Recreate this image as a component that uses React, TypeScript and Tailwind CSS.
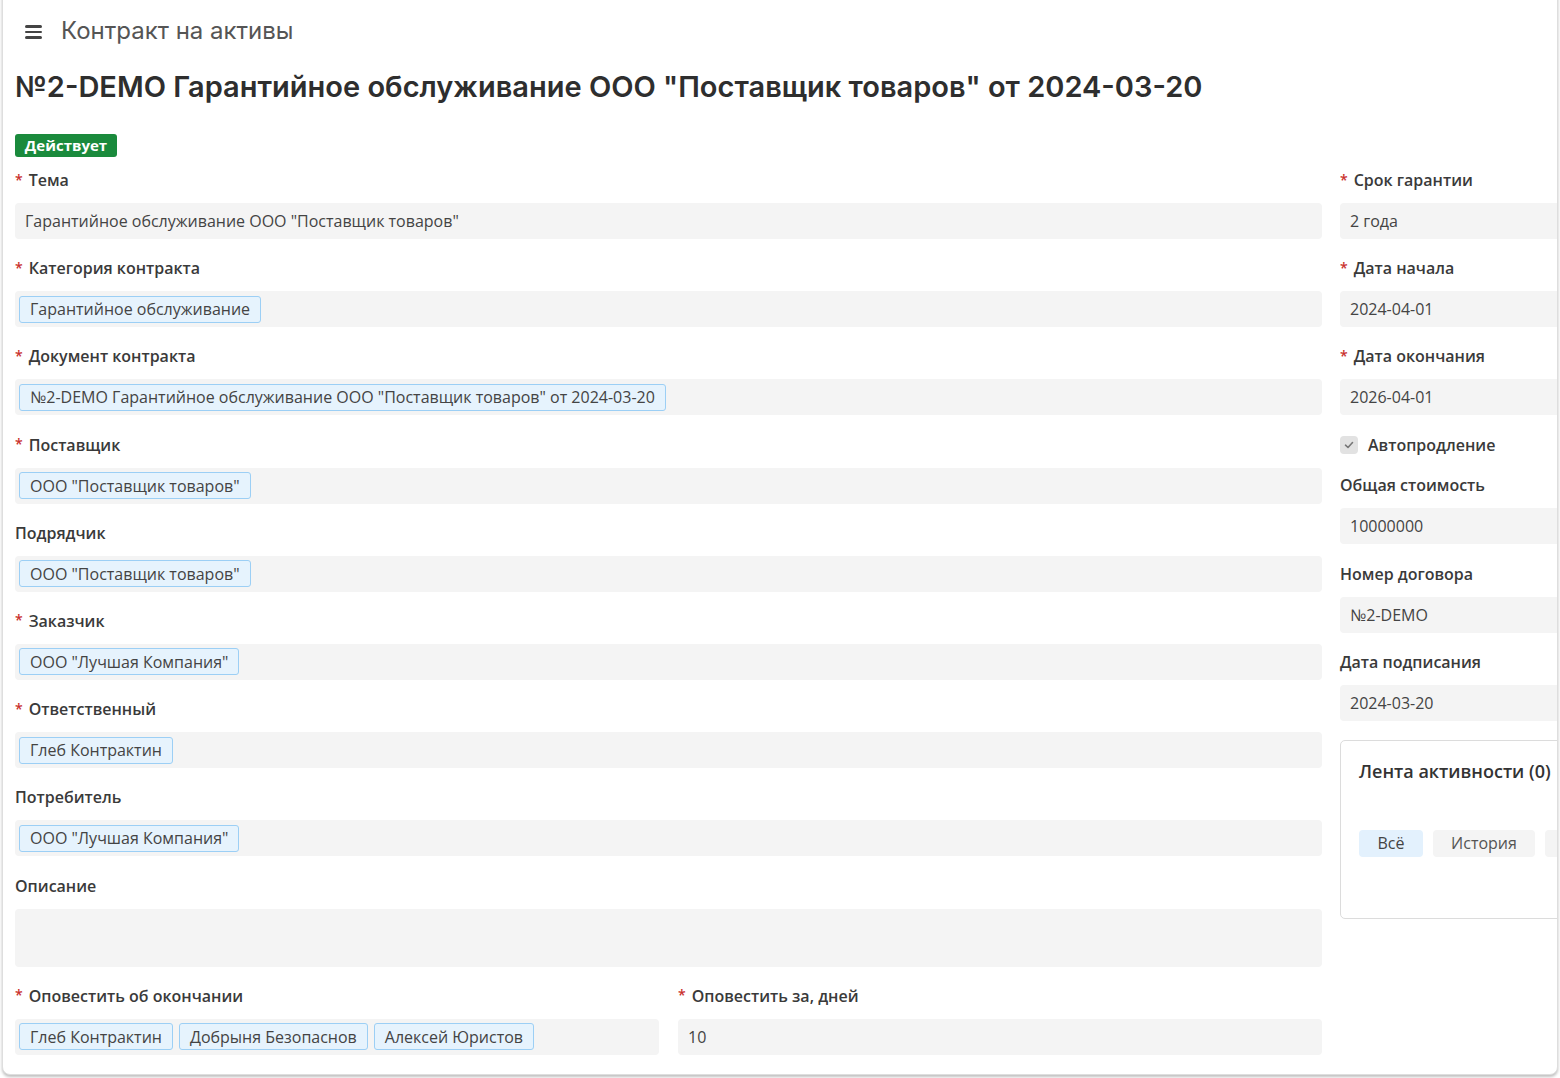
import React from "react";

const Req = () => <span className="text-[#c9302c] mr-[6px] text-[14px] leading-none relative top-[-1px]">*</span>;

function Label({ req, children }: { req?: boolean; children: React.ReactNode }) {
  return (
    <div className="h-[21px] leading-[21px] text-[16px] font-semibold text-[#3a3a3a] flex items-center whitespace-nowrap">
      {req && <Req />}
      {children}
    </div>
  );
}

function Chip({ children }: { children: React.ReactNode }) {
  return (
    <div className="h-[27px] px-[10px] border border-[#9ccff5] bg-[#e6f3fd] rounded-[3px] flex items-center text-[16px] text-[#444] whitespace-nowrap">
      {children}
    </div>
  );
}

function Input({ children, chips, h = "h-9" }: { children?: React.ReactNode; chips?: boolean; h?: string }) {
  return (
    <div
      className={`${h} rounded-[4px] bg-[#f4f4f4] flex items-center text-[16px] text-[#444] whitespace-nowrap ${
        chips ? "px-[4px] gap-[6px]" : "px-[10px]"
      }`}
    >
      {children}
    </div>
  );
}

function Field({ label, req, children }: { label: string; req?: boolean; children: React.ReactNode }) {
  return (
    <div className="flex flex-col gap-[12px]">
      <Label req={req}>{label}</Label>
      {children}
    </div>
  );
}

export default function App() {
  return (
    <div className="w-[1560px] h-[1078px] bg-white overflow-hidden" style={{ fontFamily: '"Open Sans", "Noto Sans", sans-serif' }}>
      <div className="ml-[2px] mt-[-10px] w-[1556px] h-[1085px] border border-[#dedede] rounded-b-[8px] shadow-[0_2px_3px_rgba(0,0,0,0.25)] overflow-hidden bg-white pt-[10px] px-[12px]">
        {/* header */}
        <div className="h-[62px] flex items-center">
          <div className="ml-[10px] w-[17px] flex flex-col gap-[3px]">
            <div className="h-[2.5px] bg-[#444] rounded" />
            <div className="h-[2.5px] bg-[#444] rounded" />
            <div className="h-[2.5px] bg-[#444] rounded" />
          </div>
          <div className="ml-[19px] text-[24px] text-[#555] leading-[30px] relative top-[-1px]" style={{ fontFamily: 'Inter, "Noto Sans", sans-serif' }}>
            Контракт на активы
          </div>
        </div>
        <div className="mt-[7px] h-[36px] leading-[36px] text-[29px] font-semibold text-[#2e2e2e] whitespace-nowrap relative top-[-1px]" style={{ fontFamily: 'Inter, "Noto Sans", sans-serif' }}>
          №2-DEMO Гарантийное обслуживание ООО "Поставщик товаров" от 2024-03-20
        </div>
        <div className="mt-[28px] h-[23px] w-[102px] bg-[#1a8a3c] rounded-[3px] text-white font-bold text-[15px] flex items-center justify-center">
          Действует
        </div>

        <div className="mt-[13px] flex gap-[18px]">
          {/* left column */}
          <div className="w-[1307px] shrink-0 flex flex-col gap-[19.2px]">
            <Field label="Тема" req>
              <Input>Гарантийное обслуживание ООО "Поставщик товаров"</Input>
            </Field>
            <Field label="Категория контракта" req>
              <Input chips>
                <Chip>Гарантийное обслуживание</Chip>
              </Input>
            </Field>
            <Field label="Документ контракта" req>
              <Input chips>
                <Chip>№2-DEMO Гарантийное обслуживание ООО "Поставщик товаров" от 2024-03-20</Chip>
              </Input>
            </Field>
            <Field label="Поставщик" req>
              <Input chips>
                <Chip>ООО "Поставщик товаров"</Chip>
              </Input>
            </Field>
            <Field label="Подрядчик">
              <Input chips>
                <Chip>ООО "Поставщик товаров"</Chip>
              </Input>
            </Field>
            <Field label="Заказчик" req>
              <Input chips>
                <Chip>ООО "Лучшая Компания"</Chip>
              </Input>
            </Field>
            <Field label="Ответственный" req>
              <Input chips>
                <Chip>Глеб Контрактин</Chip>
              </Input>
            </Field>
            <Field label="Потребитель">
              <Input chips>
                <Chip>ООО "Лучшая Компания"</Chip>
              </Input>
            </Field>
            <Field label="Описание">
              <Input h="h-[58px]" />
            </Field>
            <div className="grid grid-cols-2 gap-[19px]">
              <Field label="Оповестить об окончании" req>
                <Input chips>
                  <Chip>Глеб Контрактин</Chip>
                  <Chip>Добрыня Безопаснов</Chip>
                  <Chip>Алексей Юристов</Chip>
                </Input>
              </Field>
              <Field label="Оповестить за, дней" req>
                <Input>10</Input>
              </Field>
            </div>
          </div>

          {/* right column */}
          <div className="w-[320px] shrink-0 flex flex-col">
            <div className="flex flex-col gap-[19.2px]">
              <Field label="Срок гарантии" req>
                <Input>2 года</Input>
              </Field>
              <Field label="Дата начала" req>
                <Input>2024-04-01</Input>
              </Field>
              <Field label="Дата окончания" req>
                <Input>2026-04-01</Input>
              </Field>
            </div>
            <div className="mt-[20px] h-[20px] flex items-center gap-[10px]">
              <div className="w-[18px] h-[18px] rounded-[4px] bg-[#e2e2e2] flex items-center justify-center">
                <svg width="12" height="12" viewBox="0 0 12 12">
                  <path d="M2.5 6.2 L5 8.5 L9.5 3.5" stroke="#777" strokeWidth="1.6" fill="none" strokeLinecap="round" strokeLinejoin="round" />
                </svg>
              </div>
              <div className="text-[16px] font-semibold text-[#3a3a3a]">Автопродление</div>
            </div>
            <div className="mt-[20px] flex flex-col gap-[19.2px]">
              <Field label="Общая стоимость">
                <Input>10000000</Input>
              </Field>
              <Field label="Номер договора">
                <Input>№2-DEMO</Input>
              </Field>
              <Field label="Дата подписания">
                <Input>2024-03-20</Input>
              </Field>
            </div>
            <div className="mt-[19px] h-[179px] border border-[#dcdcdc] rounded-[5px] px-[18px] pt-[18px] overflow-hidden">
              <div className="text-[18px] font-semibold text-[#333] leading-[24px] whitespace-nowrap">Лента активности (0)</div>
              <div className="mt-[47px] flex gap-[10px]">
                <div className="shrink-0 h-[27px] w-[64px] rounded-[4px] bg-[#e3f1fd] text-[16px] text-[#444] flex items-center justify-center">Всё</div>
                <div className="shrink-0 h-[27px] w-[102px] rounded-[4px] bg-[#f4f4f4] text-[16px] text-[#555] flex items-center justify-center">История</div>
                <div className="shrink-0 h-[27px] w-[130px] rounded-[4px] bg-[#f4f4f4]" />
              </div>
            </div>
          </div>
        </div>
      </div>
    </div>
  );
}
